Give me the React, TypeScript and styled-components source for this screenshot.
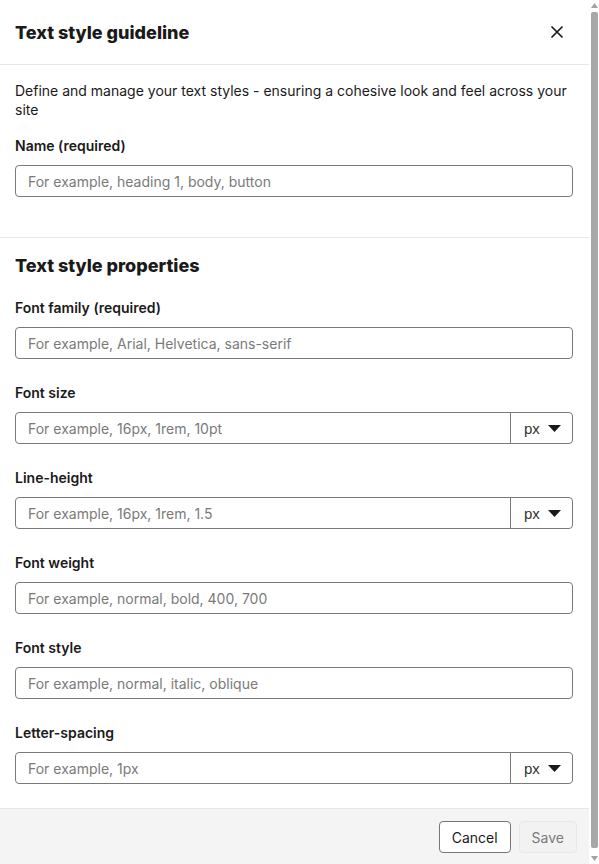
import React from 'react'
import styled, { createGlobalStyle } from 'styled-components'

const GlobalStyle = createGlobalStyle`
  html, body {
    margin: 0;
    padding: 0;
    background: #fff;
  }
  body {
    font-family: Inter, 'Noto Sans', sans-serif;
    color: #1a1a1a;
  }
  * { box-sizing: border-box; }
`

type Field = { label: string; placeholder: string; unit?: boolean }

const fields: Field[] = [
  { label: 'Font family (required)', placeholder: 'For example, Arial, Helvetica, sans-serif' },
  { label: 'Font size', placeholder: 'For example, 16px, 1rem, 10pt', unit: true },
  { label: 'Line-height', placeholder: 'For example, 16px, 1rem, 1.5', unit: true },
  { label: 'Font weight', placeholder: 'For example, normal, bold, 400, 700' },
  { label: 'Font style', placeholder: 'For example, normal, italic, oblique' },
  { label: 'Letter-spacing', placeholder: 'For example, 1px', unit: true },
]

const CloseIcon = () => (
  <svg width="12" height="12" viewBox="0 0 12 12" fill="none">
    <path d="M1 1L11 11M11 1L1 11" stroke="#1a1a1a" strokeWidth="1.7" strokeLinecap="round" />
  </svg>
)

const Caret = () => (
  <svg width="13" height="7" viewBox="0 0 13 7">
    <path d="M0 0H13L6.5 7Z" fill="#1a1a1a" />
  </svg>
)

const ArrowUp = () => (
  <svg width="7" height="5" viewBox="0 0 7 5">
    <path d="M0 5H7L3.5 0Z" fill="#a3a3a3" />
  </svg>
)

const ArrowDown = () => (
  <svg width="7" height="5" viewBox="0 0 7 5">
    <path d="M0 0H7L3.5 5Z" fill="#a3a3a3" />
  </svg>
)

const FormField = ({ field }: { field: Field }) => (
  <FieldBlock>
    <Label>{field.label}</Label>
    <InputRow>
      <Input placeholder={field.placeholder} />
      {field.unit && (
        <Unit>
          <span>px</span>
          <Caret />
        </Unit>
      )}
    </InputRow>
  </FieldBlock>
)

const App = () => (
  <>
    <GlobalStyle />
    <Page>
      <Header>
        <Title>Text style guideline</Title>
        <CloseButton aria-label="Close"><CloseIcon /></CloseButton>
      </Header>

      <Section>
        <Description>
          Define and manage your text styles - ensuring a cohesive look and feel across your site
        </Description>
        <Label>Name (required)</Label>
        <InputRow>
          <Input placeholder="For example, heading 1, body, button" />
        </InputRow>
      </Section>

      <Properties>
        <Heading>Text style properties</Heading>
        {fields.map(f => <FormField key={f.label} field={f} />)}
      </Properties>

      <Footer>
        <Button>Cancel</Button>
        <Button disabled>Save</Button>
      </Footer>
    </Page>

    <ScrollBar>
      <ArrowUp />
      <Thumb />
      <ArrowDown />
    </ScrollBar>
  </>
)

const Page = styled.div`
  display: flex;
  flex-direction: column;
  width: 589px;
  height: 864px;
  overflow: hidden;
  background: #fff;
`

const ScrollBar = styled.div`
  position: fixed;
  top: 0;
  right: 0;
  width: 10px;
  height: 864px;
  display: flex;
  flex-direction: column;
  align-items: center;
  padding: 3px 0 3px;
  gap: 4px;
  background: #fff;
`

const Thumb = styled.div`
  flex: 1;
  width: 7px;
  margin: 0 0 4px;
  border-radius: 2px;
  background: #a8a8a8;
`

const Header = styled.div`
  display: flex;
  align-items: center;
  justify-content: space-between;
  flex-shrink: 0;
  height: 65px;
  padding: 0 26px 0 15px;
  border-bottom: 1px solid #e8e8e8;
`

const Title = styled.h1`
  margin: 0;
  font-size: 18px;
  font-weight: 800;
  color: #1a1a1a;
`

const CloseButton = styled.button`
  display: flex;
  align-items: center;
  justify-content: center;
  padding: 0;
  border: 0;
  background: none;
  cursor: pointer;
`

const Section = styled.div`
  display: flex;
  flex-direction: column;
  flex-shrink: 0;
  padding: 16px 16px 40px 15px;
  border-bottom: 1px solid #e8e8e8;
`

const Description = styled.p`
  margin: 0 0 17px;
  font-size: 14px;
  line-height: 19px;
  color: #1a1a1a;
`

const Properties = styled.div`
  display: flex;
  flex-direction: column;
  flex-shrink: 0;
  padding: 16px 16px 24px 15px;
`

const Heading = styled.h2`
  margin: 0 0 20px;
  font-size: 18px;
  line-height: 24px;
  font-weight: 800;
  color: #1a1a1a;
`

const FieldBlock = styled.div`
  display: flex;
  flex-direction: column;
  & + & { margin-top: 24px; }
`

const Label = styled.label`
  display: block;
  margin-bottom: 9px;
  font-size: 14px;
  line-height: 20px;
  font-weight: 600;
  color: #1a1a1a;
`

const InputRow = styled.div`
  display: flex;
  height: 32px;
  border: 1px solid #7a7a7a;
  border-radius: 4px;
  background: #fff;
  overflow: hidden;
`

const Input = styled.input`
  flex: 1;
  min-width: 0;
  border: 0;
  outline: none;
  padding: 0 12px;
  font-family: Inter, 'Noto Sans', sans-serif;
  font-size: 14px;
  color: #1a1a1a;
  background: transparent;

  &::placeholder { color: #7a7a7a; }
`

const Unit = styled.div`
  display: flex;
  align-items: center;
  gap: 8px;
  width: 62px;
  padding-left: 13px;
  border-left: 1px solid #7a7a7a;
  font-family: 'Liberation Sans', Arial, sans-serif;
  font-size: 15px;
  color: #333;
`

const Footer = styled.div`
  display: flex;
  justify-content: flex-end;
  gap: 8px;
  flex: 1;
  padding: 12px 12px 0;
  background: #f4f4f4;
  border-top: 1px solid #e6e6e6;
`

const Button = styled.button`
  height: 32px;
  padding: 0 12px;
  border-radius: 4px;
  border: 1px solid #767676;
  background: #fff;
  font-family: Inter, 'Noto Sans', sans-serif;
  font-size: 14px;
  color: #1a1a1a;
  cursor: pointer;

  &:disabled {
    border-color: #e8e8e8;
    background: #f2f2f2;
    color: #7a7a7a;
    cursor: default;
  }
`

export default App
